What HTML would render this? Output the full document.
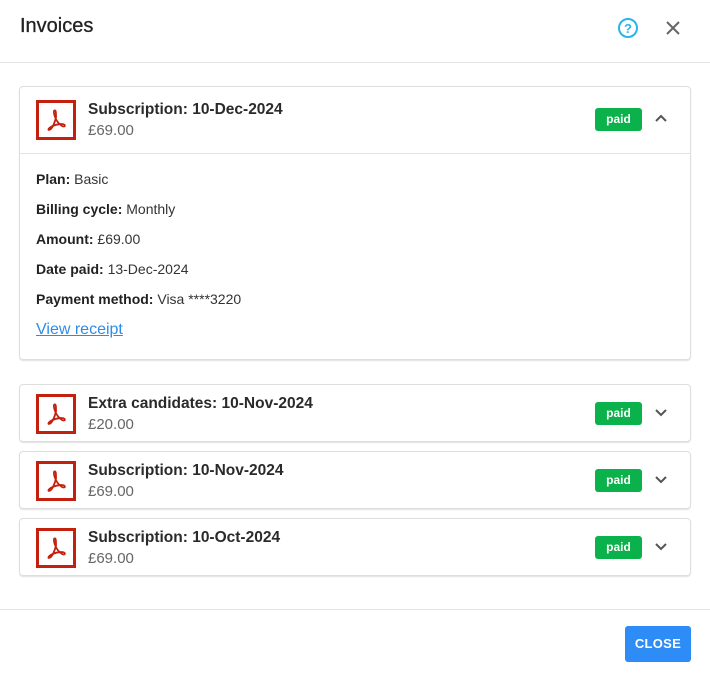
<!DOCTYPE html>
<html><head><style>
*{box-sizing:border-box;margin:0;padding:0}
body{width:710px;height:675px;background:#fff;font-family:"Liberation Sans",Arial,sans-serif;color:#222;position:relative;overflow:hidden}
.title{position:absolute;left:20px;top:15px;font-size:20px;color:#222;-webkit-text-stroke:0.3px #222}
.hr{position:absolute;left:0;width:710px;height:1px;background:#e2e2e2}
.card{position:absolute;left:19px;width:672px;border:1px solid #dedede;border-radius:4px;box-shadow:0 1px 1px rgba(0,0,0,.12)}
.ic{position:absolute;left:16px;top:13px;width:40px;height:40px;border:3px solid #c4200e;background:#fff}
.ic svg{position:absolute;left:5px;top:5px}
.h{position:absolute;left:68px;top:14px;font-size:15.5px;font-weight:bold;color:#2a2a2a}
.p{position:absolute;left:68px;top:35px;font-size:15px;color:#666}
.paid{position:absolute;left:575px;top:21px;width:47px;height:23px;background:#0bb14a;color:#fff;font-size:12px;font-weight:bold;border-radius:3px;text-align:center;line-height:23px}
.chev{position:absolute;left:634px;top:26px}
.body{position:absolute;top:66px;left:0;right:0;border-top:1px solid #e2e2e2;padding:17px 16px;font-size:14px;color:#333}
.body div{height:30px}
.body b{color:#222}
a{color:#2d8ceb;font-size:16px;text-decoration:underline}
.btn{position:absolute;left:625px;top:626px;width:66px;height:36px;background:#2d8cf5;color:#fff;border-radius:3px;font-size:13px;font-weight:bold;text-align:center;line-height:36px;letter-spacing:.3px}
</style></head><body>
<div class="title">Invoices</div>
<svg style="position:absolute;left:617px;top:17px" width="22" height="22" viewBox="0 0 22 22"><circle cx="11" cy="11" r="9" fill="none" stroke="#29b5e8" stroke-width="2"/><text x="11" y="16" text-anchor="middle" font-size="13" font-weight="bold" fill="#29b5e8" font-family="Liberation Sans">?</text></svg>
<svg style="position:absolute;left:665px;top:20px" width="16" height="16" viewBox="0 0 16 16"><path d="M2 2L14 14M14 2L2 14" stroke="#666" stroke-width="2"/></svg>
<div class="hr" style="top:62px"></div>

<div class="card" style="top:86px;height:274px">
<div class="ic"><svg width="24" height="24" viewBox="0 0 20 20"><path d="M9 2c-1 0-1 2 0 5 1 3 3 6 6 8 2 1 3 0 2-1-1-1-5-1-10 1-4 2-4 4-2 3 2-1 4-6 5-10 0-4 0-6-1-6z" fill="none" stroke="#c4200e" stroke-width="1.5"/></svg></div>
<div class="h">Subscription: 10-Dec-2024</div><div class="p">£69.00</div>
<div class="paid">paid</div>
<svg class="chev" width="14" height="10" viewBox="0 0 14 10"><path d="M2 8L7 3L12 8" fill="none" stroke="#555" stroke-width="2"/></svg>
<div class="body">
<div><b>Plan:</b> Basic</div>
<div><b>Billing cycle:</b> Monthly</div>
<div><b>Amount:</b> £69.00</div>
<div><b>Date paid:</b> 13-Dec-2024</div>
<div><b>Payment method:</b> Visa ****3220</div>
<a>View receipt</a>
</div>
</div>

<div class="card" style="top:384px;height:58px">
<div class="ic" style="top:9px"><svg width="24" height="24" viewBox="0 0 20 20"><path d="M9 2c-1 0-1 2 0 5 1 3 3 6 6 8 2 1 3 0 2-1-1-1-5-1-10 1-4 2-4 4-2 3 2-1 4-6 5-10 0-4 0-6-1-6z" fill="none" stroke="#c4200e" stroke-width="1.5"/></svg></div>
<div class="h" style="top:10px">Extra candidates: 10-Nov-2024</div><div class="p" style="top:31px">£20.00</div>
<div class="paid" style="top:17px">paid</div>
<svg class="chev" style="top:23px" width="14" height="10" viewBox="0 0 14 10"><path d="M2 2L7 7L12 2" fill="none" stroke="#555" stroke-width="2"/></svg>
</div>

<div class="card" style="top:451px;height:58px">
<div class="ic" style="top:9px"><svg width="24" height="24" viewBox="0 0 20 20"><path d="M9 2c-1 0-1 2 0 5 1 3 3 6 6 8 2 1 3 0 2-1-1-1-5-1-10 1-4 2-4 4-2 3 2-1 4-6 5-10 0-4 0-6-1-6z" fill="none" stroke="#c4200e" stroke-width="1.5"/></svg></div>
<div class="h" style="top:10px">Subscription: 10-Nov-2024</div><div class="p" style="top:31px">£69.00</div>
<div class="paid" style="top:17px">paid</div>
<svg class="chev" style="top:23px" width="14" height="10" viewBox="0 0 14 10"><path d="M2 2L7 7L12 2" fill="none" stroke="#555" stroke-width="2"/></svg>
</div>

<div class="card" style="top:518px;height:58px">
<div class="ic" style="top:9px"><svg width="24" height="24" viewBox="0 0 20 20"><path d="M9 2c-1 0-1 2 0 5 1 3 3 6 6 8 2 1 3 0 2-1-1-1-5-1-10 1-4 2-4 4-2 3 2-1 4-6 5-10 0-4 0-6-1-6z" fill="none" stroke="#c4200e" stroke-width="1.5"/></svg></div>
<div class="h" style="top:10px">Subscription: 10-Oct-2024</div><div class="p" style="top:31px">£69.00</div>
<div class="paid" style="top:17px">paid</div>
<svg class="chev" style="top:23px" width="14" height="10" viewBox="0 0 14 10"><path d="M2 2L7 7L12 2" fill="none" stroke="#555" stroke-width="2"/></svg>
</div>

<div class="hr" style="top:609px"></div>
<div class="btn">CLOSE</div>
</body></html>
